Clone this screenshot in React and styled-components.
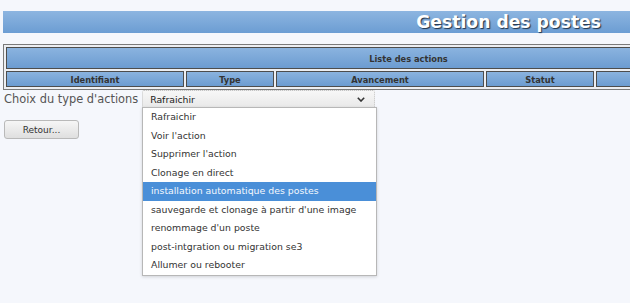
import styled, { createGlobalStyle } from 'styled-components';

const GlobalStyle = createGlobalStyle`
    html, body {
        margin: 0;
        padding: 0;
        background: #f5f7fc;
        overflow: hidden;
    }
`;

const Page = styled.div`
    position: relative;
    padding: 11px 0 0 3px;
    font-family: "DejaVu Sans", sans-serif;
    min-height: 303px;
    box-sizing: border-box;
`;

const TitleBar = styled.div`
    height: 22px;
    display: flex;
    align-items: center;
    justify-content: flex-end;
    padding-right: 29px;
    background: linear-gradient(#8db5e0, #6c9dd3);
    margin-bottom: 11px;
`;

const Title = styled.h1`
    margin: 0;
    font-size: 17.2px;
    font-weight: bold;
    color: #fff;
    text-shadow: 1px 1px 1px #223247;
    line-height: 22px;
`;

const ActionTable = styled.table`
    width: 811px;
    table-layout: fixed;
    border: 1px solid #7a7a7a;
    border-spacing: 2px;
    background: #eceef2;
`;

const HeadCell = styled.th`
    height: ${(p) => p.$h}px;
    padding: 0;
    border: 1px solid #4d4d4d;
    background: linear-gradient(#8ab3df, #6c9cd1);
    color: #333;
    font-family: "DejaVu Sans Condensed", "DejaVu Sans", sans-serif;
    font-stretch: condensed;
    font-size: 9.2px;
    font-weight: bold;
    text-align: center;
    box-sizing: border-box;
`;

const ChoiceRow = styled.div`
    display: flex;
    align-items: center;
    gap: 4px;
    height: 18px;
    padding-left: 1px;
`;

const Label = styled.span`
    font-size: 11.4px;
    color: #555;
`;

const SelectBox = styled.div`
    width: 233px;
    height: 18px;
    box-sizing: border-box;
    display: flex;
    align-items: center;
    justify-content: space-between;
    padding: 0 9px 0 7px;
    border: 1px dotted #c4c4c4;
    border-radius: 2px;
    background: linear-gradient(#f7f7f7, #e9e9e9);
    font-size: 9.3px;
    color: #222;
`;

const Retour = styled.button`
    margin: 12px 0 0 1px;
    width: 75px;
    height: 19px;
    border: 1px solid #b9b9b9;
    border-radius: 3px;
    background: linear-gradient(#f6f6f6, #dfdfdf);
    font-family: "DejaVu Sans", sans-serif;
    font-size: 9px;
    color: #333;
    padding: 0;
`;

const Popup = styled.ul`
    position: absolute;
    left: 142px;
    top: 107px;
    width: 235px;
    margin: 0;
    padding: 0;
    list-style: none;
    background: #fff;
    border: 1px solid #b7b7b7;
    box-sizing: border-box;
    box-shadow: 0 1px 3px rgba(0, 0, 0, 0.15);
`;

const Option = styled.li`
    height: 18.5px;
    line-height: 18.5px;
    padding-left: 8px;
    font-size: 9.35px;
    white-space: nowrap;
    color: ${(p) => (p.$active ? '#f4f8fd' : '#333')};
    background: ${(p) => (p.$active ? '#4a8fd8' : 'transparent')};
`;

const columns = [
    { label: 'Identifiant', width: 178 },
    { label: 'Type', width: 88 },
    { label: 'Avancement', width: 208 },
    { label: 'Statut', width: 108 },
    { label: '', width: 215 },
];

const options = [
    'Rafraichir',
    "Voir l'action",
    "Supprimer l'action",
    'Clonage en direct',
    'installation automatique des postes',
    "sauvegarde et clonage à partir d'une image",
    "renommage d'un poste",
    'post-intgration ou migration se3',
    'Allumer ou rebooter',
];

function App() {
    return (
        <>
            <GlobalStyle />
            <Page>
                <TitleBar>
                    <Title>Gestion des postes</Title>
                </TitleBar>
                <ActionTable>
                    <colgroup>
                        {columns.map((c, i) => (
                            <col key={i} style={{ width: c.width }} />
                        ))}
                    </colgroup>
                    <thead>
                        <tr>
                            <HeadCell colSpan={5} $h={22}>Liste des actions</HeadCell>
                        </tr>
                        <tr>
                            {columns.map((c, i) => (
                                <HeadCell key={i} $h={16}>{c.label}</HeadCell>
                            ))}
                        </tr>
                    </thead>
                </ActionTable>
                <ChoiceRow>
                    <Label>Choix du type d'actions</Label>
                    <SelectBox>
                        <span>Rafraichir</span>
                        <svg width="8" height="5" viewBox="0 0 8 5">
                            <polyline points="0.8,0.8 4,4 7.2,0.8" fill="none" stroke="#333" strokeWidth="1.6" />
                        </svg>
                    </SelectBox>
                </ChoiceRow>
                <Retour>Retour...</Retour>
                <Popup>
                    {options.map((o, i) => (
                        <Option key={i} $active={i === 4}>{o}</Option>
                    ))}
                </Popup>
            </Page>
        </>
    );
}

export default App;
